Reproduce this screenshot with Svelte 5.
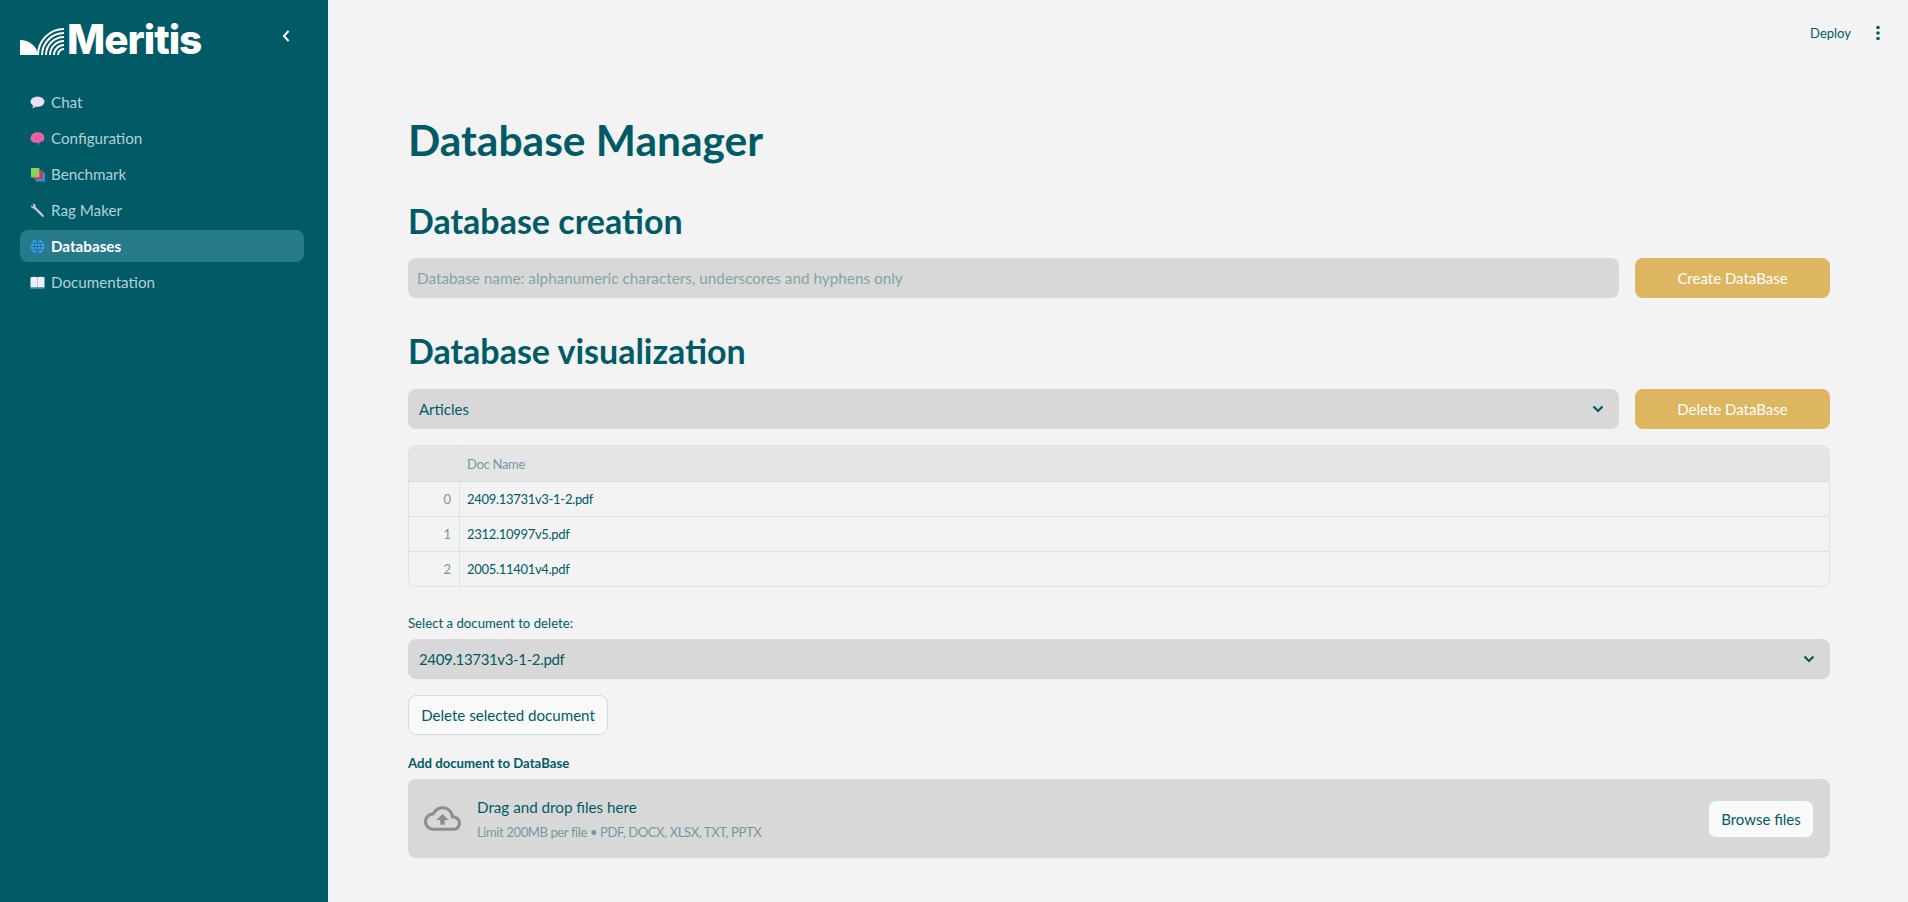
<script>
  const navItems = [
    { label: 'Chat', icon: 'chat' },
    { label: 'Configuration', icon: 'brain' },
    { label: 'Benchmark', icon: 'books' },
    { label: 'Rag Maker', icon: 'wrench' },
    { label: 'Databases', icon: 'globe', active: true },
    { label: 'Documentation', icon: 'book' }
  ];
  const docs = ['2409.13731v3-1-2.pdf', '2312.10997v5.pdf', '2005.11401v4.pdf'];
  const arcs = [6, 10, 14, 18, 22, 26];
</script>

{#snippet chevron()}
  <svg class="chevron" viewBox="0 0 12 8" width="12" height="8">
    <path d="M1.500 1.500 6 6l4.500-4.500" fill="none" stroke="currentColor" stroke-width="2.2" />
  </svg>
{/snippet}

<div class="page">
  <aside class="sidebar">
    <div class="brand">
      <div class="logo">
        <svg viewBox="0 0 44 27" width="44" height="27">
          <path d="M0 12C9 12 17 18 18 27H0z" fill="#fff" />
          {#each arcs as r}
            <path d="M{44 - r} 27A{r} {r} 0 0 1 44 {27 - r}" fill="none" stroke="#fff" stroke-width="2" />
          {/each}
        </svg>
        <span>Meritis</span>
      </div>
      <svg class="collapse" viewBox="0 0 10 14" width="10" height="14">
        <path d="M7.500 2 3 7l4.500 5" fill="none" stroke="#fff" stroke-width="2" />
      </svg>
    </div>
    <nav>
      {#each navItems as item}
        <a class="nav-item" class:active={item.active} href="#top">
          <svg viewBox="0 0 16 16" width="15" height="15">
            {#if item.icon === 'chat'}
              <ellipse cx="8" cy="7" rx="7.500" ry="5.500" fill="#eadff3" />
              <path d="M3.500 10 2.500 14.500 8 12z" fill="#d9cbe6" />
            {:else if item.icon === 'brain'}
              <path d="M4 2.500C6 1 11 1 13 3c2.500 1 3 5 1.500 7-1 1.500-3 1-4.500 2l-.5 3.500L8 12.500C5 12.500 1.500 12 .7 9 .2 6 2 3.500 4 2.500z" fill="#ee62a8" />
              <path d="M5 5c2 1 2 3 1 4M9 4c1 2 3 2 4 3M8 8c1 1 2 1 3 1" fill="none" stroke="#c9408a" stroke-width=".8" />
            {:else if item.icon === 'books'}
              <rect x="6" y="6" width="10" height="9.500" fill="#3d8fd6" />
              <rect x="3.500" y="3.500" width="10" height="9.500" fill="#d8325c" />
              <rect x="1" y="1" width="9" height="10" fill="#8ccf5a" />
            {:else if item.icon === 'wrench'}
              <path d="M4 4 13 13" stroke="#c3c8d2" stroke-width="2.600" />
              <path d="M1 2.500 2.500 4 4 2.500 2.500 1c2-.8 4 .8 3.500 3L5 6C3 6.500.3 4.500 1 2.500zM15 13.500 13.500 12 12 13.500l1.500 1.500c1 .2 1.500-.5 1.500-1.500z" fill="#c3c8d2" />
            {:else if item.icon === 'globe'}
              <circle cx="8" cy="8" r="7.500" fill="#3aa4e4" />
              <path d="M.5 8h15M1.500 4.500h13M1.500 11.500h13M8 .5v15M8 .5C3.500 4 3.500 12 8 15.500M8 .5c4.500 3.500 4.500 11.500 0 15" fill="none" stroke="#0d5f85" stroke-width=".7" />
            {:else}
              <path d="M.5 2.500c3-1 5.500-1 7.500 0 2-1 4.500-1 7.500 0v10.500H.5z" fill="#eef0f4" />
              <path d="M.5 13h15v1.500H.5z" fill="#6f9fd8" />
              <path d="M8 2.500V13" stroke="#a9b4c4" stroke-width=".8" />
            {/if}
          </svg>
          <span>{item.label}</span>
        </a>
      {/each}
    </nav>
  </aside>

  <main>
    <header class="toolbar">
      <span>Deploy</span>
      <svg viewBox="0 0 4 16" width="4" height="16">
        <circle cx="2" cy="2.500" r="1.800" /><circle cx="2" cy="8" r="1.800" /><circle cx="2" cy="13.500" r="1.800" />
      </svg>
    </header>

    <div class="content">
      <h1>Database Manager</h1>

      <h2>Database creation</h2>
      <div class="row">
        <div class="field placeholder">Database name: alphanumeric characters, underscores and hyphens only</div>
        <button class="primary">Create DataBase</button>
      </div>

      <h2 class="second">Database visualization</h2>
      <div class="row">
        <div class="field select">Articles{@render chevron()}</div>
        <button class="primary">Delete DataBase</button>
      </div>

      <div class="table">
        <div class="tr head">
          <div class="idx"></div>
          <div class="cell">Doc Name</div>
        </div>
        {#each docs as doc, i}
          <div class="tr">
            <div class="idx">{i}</div>
            <div class="cell">{doc}</div>
          </div>
        {/each}
      </div>

      <p class="label">Select a document to delete:</p>
      <div class="field select"><span class="doc">2409.13731v3-1-2.pdf</span>{@render chevron()}</div>

      <button class="secondary">Delete selected document</button>

      <p class="label strong">Add document to DataBase</p>
      <div class="uploader">
        <svg viewBox="0 0 24 24" width="37" height="37" fill="#8b8f90">
          <path d="M19.35 10.04C18.67 6.59 15.64 4 12 4 9.11 4 6.6 5.64 5.35 8.04 2.34 8.36 0 10.91 0 14c0 3.31 2.69 6 6 6h13c2.76 0 5-2.24 5-5 0-2.64-2.05-4.78-4.65-4.96zM19 18H6c-2.21 0-4-1.79-4-4 0-2.05 1.53-3.76 3.56-3.97l1.07-.11.5-.95C8.08 7.14 9.94 6 12 6c2.62 0 4.88 1.86 5.39 4.43l.3 1.5 1.53.11c1.56.1 2.78 1.41 2.78 2.96 0 1.65-1.35 3-3 3zM8 13h2.55v3h2.9v-3H16l-4-4z" />
        </svg>
        <div class="drop-text">
          <div>Drag and drop files here</div>
          <small>Limit 200MB per file • PDF, DOCX, XLSX, TXT, PPTX</small>
        </div>
        <button class="browse">Browse files</button>
      </div>
    </div>
  </main>
</div>

<style>
  :global(body) {
    margin: 0;
    background: #f3f3f3;
    font-family: 'Lato', 'Noto Sans', sans-serif;
    color: #005b67;
  }

  .page {
    display: flex;
    height: 902px;
    overflow: hidden;
  }

  .sidebar {
    width: 328px;
    flex: none;
    background: #005b67;
    padding: 24px 24px 0 20px;
    box-sizing: border-box;
  }

  .brand {
    display: flex;
    justify-content: space-between;
    height: 32px;
    margin-bottom: 30px;
  }

  .logo {
    display: flex;
    align-items: flex-end;
    gap: 3px;
    color: #fff;
    font-family: 'Inter', sans-serif;
    font-weight: 800;
    font-size: 40.5px;
    line-height: 32px;
    letter-spacing: -1px;
  }

  .logo svg {
    margin-bottom: 1px;
  }

  .collapse {
    margin: 5px 13px 0 0;
  }

  nav {
    display: flex;
    flex-direction: column;
    gap: 4px;
  }

  .nav-item {
    display: flex;
    align-items: center;
    gap: 6px;
    height: 32px;
    padding-left: 10px;
    border-radius: 8px;
    color: #b5d0d3;
    font-size: 15.2px;
    text-decoration: none;
  }

  .nav-item.active {
    background: #277a89;
    color: #fff;
    font-weight: 700;
  }

  main {
    flex: 1;
    min-width: 0;
  }

  .toolbar {
    display: flex;
    justify-content: flex-end;
    align-items: center;
    gap: 25px;
    height: 66px;
    padding-right: 28px;
    font-size: 13px;
  }

  .toolbar svg {
    fill: #005b67;
  }

  .content {
    padding: 44px 78px 0 80px;
  }

  h1 {
    margin: 0;
    font-size: 42.5px;
    line-height: 60px;
    font-weight: 700;
  }

  h2 {
    margin: 28px 0 14px;
    font-size: 34px;
    line-height: 46px;
    font-weight: 700;
  }

  h2.second {
    margin: 30px 0 15px;
  }

  .row {
    display: flex;
    gap: 16px;
  }

  .row .field {
    flex: 1;
  }

  .field {
    display: flex;
    align-items: center;
    justify-content: space-between;
    height: 40px;
    padding: 0 15px 0 11px;
    background: #d8d8d8;
    border-radius: 8px;
    font-size: 15px;
    box-sizing: border-box;
  }

  .doc {
    letter-spacing: -0.35px;
  }

  .placeholder {
    color: #84a4a9;
    padding-left: 9px;
    font-size: 15.3px;
  }

  button {
    font: inherit;
    color: inherit;
    cursor: pointer;
    box-sizing: border-box;
  }

  .primary {
    width: 195px;
    height: 40px;
    border: 0;
    border-radius: 8px;
    background: #deb561;
    color: #fff;
    font-size: 15px;
  }

  .table {
    margin-top: 16px;
    height: 142px;
    box-sizing: border-box;
    border: 1px solid #dbe3e5;
    border-radius: 8px;
    overflow: hidden;
    font-size: 13px;
  }

  .tr {
    display: flex;
    height: 35px;
    line-height: 35px;
    border-bottom: 1px solid #dbe3e5;
    box-sizing: border-box;
  }

  .tr:last-child {
    border-bottom: 0;
  }

  .tr.head {
    height: 36px;
    line-height: 36px;
    background: #e5e5e5;
    color: #6f9aa1;
    border-bottom-color: #d2dcdd;
  }

  .idx {
    width: 51px;
    flex: none;
    box-sizing: border-box;
    padding-right: 8px;
    text-align: right;
    color: #6f9aa1;
    border-right: 1px solid #dbe3e5;
  }

  .cell {
    padding-left: 7px;
    letter-spacing: -0.3px;
  }

  .label {
    margin: 26px 0 6px;
    font-size: 13.2px;
    line-height: 20px;
  }

  .label.strong {
    font-weight: 700;
    margin: 18px 0 6px;
  }

  .secondary {
    display: block;
    width: 200px;
    height: 40px;
    margin-top: 16px;
    background: #f9f9f9;
    border: 1px solid #cfdcde;
    border-radius: 8px;
    font-size: 15.1px;
  }

  .uploader {
    display: flex;
    align-items: center;
    height: 79px;
    padding: 0 16px;
    background: #d8d8d8;
    border-radius: 8px;
  }

  .drop-text {
    flex: 1;
    margin-left: 16px;
    padding-top: 2px;
    font-size: 15.2px;
    line-height: 22px;
  }

  .drop-text small {
    display: block;
    font-size: 13px;
    letter-spacing: -0.38px;
    color: #6f9aa1;
    margin-top: 3px;
  }

  .browse {
    width: 106px;
    height: 38px;
    background: #f9f9f9;
    border: 1px solid #d0dcdd;
    border-radius: 8px;
    font-size: 15px;
  }
</style>
